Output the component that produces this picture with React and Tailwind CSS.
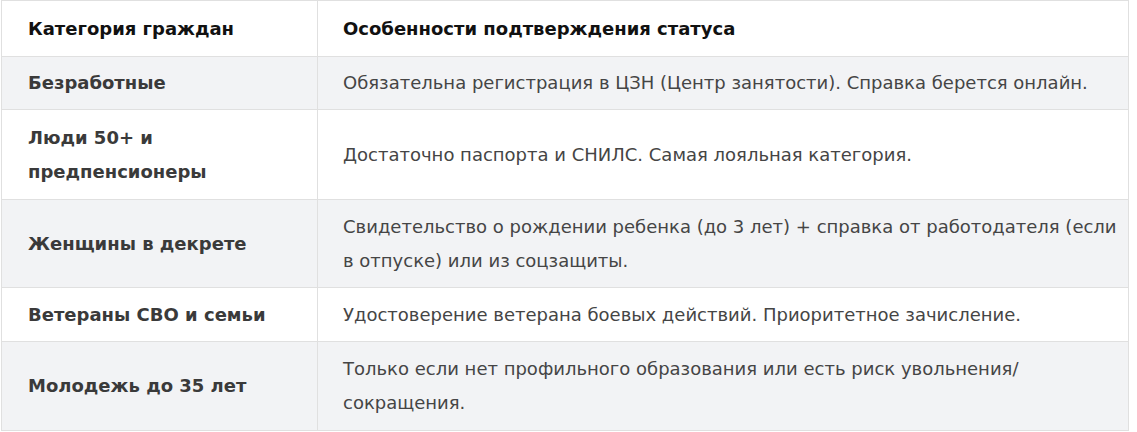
import React from 'react'

const ROWS = [
  { cat: 'Безработные', text: 'Обязательна регистрация в ЦЗН (Центр занятости). Справка берется онлайн.', h: 'h-[53px]' },
  { cat: 'Люди 50+ и предпенсионеры', text: 'Достаточно паспорта и СНИЛС. Самая лояльная категория.', h: 'h-[90px]' },
  { cat: 'Женщины в декрете', text: 'Свидетельство о рождении ребенка (до 3 лет) + справка от работодателя (если в отпуске) или из соцзащиты.', h: 'h-[88px]' },
  { cat: 'Ветераны СВО и семьи', text: 'Удостоверение ветерана боевых действий. Приоритетное зачисление.', h: 'h-[54px]' },
  { cat: 'Молодежь до 35 лет', text: 'Только если нет профильного образования или есть риск увольнения/ сокращения.', h: 'h-[89px]' },
]

export default function App() {
  return (
    <div className="bg-white w-[1137px] h-[432px] pl-[1px] font-['DejaVu_Sans',sans-serif]">
      <table className="w-[1128px] border-collapse table-fixed">
        <colgroup>
          <col className="w-[316px]" />
          <col />
        </colgroup>
        <thead>
          <tr className="h-[56px]">
            <th className="border border-[#e0e0e0] px-[26px] text-left align-middle text-[18px] font-bold text-[#111] leading-[34px]">
              Категория граждан
            </th>
            <th className="border border-[#e0e0e0] pl-[25px] pr-[4px] text-left align-middle text-[18px] font-bold text-[#111] leading-[34px]">
              Особенности подтверждения статуса
            </th>
          </tr>
        </thead>
        <tbody>
          {ROWS.map((r, i) => (
            <tr key={r.cat} className={`${r.h} ${i % 2 === 0 ? 'bg-[#f2f3f5]' : 'bg-white'}`}>
              <td className="border border-[#e0e0e0] px-[26px] py-[9px] align-middle text-[18px] font-bold text-[#3a3a3a] leading-[34px]">
                {r.cat}
              </td>
              <td className="border border-[#e0e0e0] pl-[25px] pr-[4px] py-[9px] align-middle text-[18px] text-[#454545] leading-[34px]">
                {r.text}
              </td>
            </tr>
          ))}
        </tbody>
      </table>
    </div>
  )
}
